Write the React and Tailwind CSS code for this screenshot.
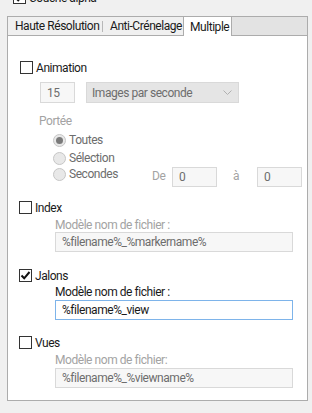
import React from "react";

const font = { fontFamily: 'Roboto, "Noto Sans", sans-serif' };

function Check({ checked, className = "" }) {
  return (
    <div className={"w-[13px] h-[13px] border border-[#333333] bg-white flex items-center justify-center shrink-0 " + className}>
      {checked && (
        <svg width="11" height="11" viewBox="0 0 11 11">
          <path d="M1.5 5.5 L4.2 8.3 L9.5 2" stroke="#111" strokeWidth="2" fill="none" />
        </svg>
      )}
    </div>
  );
}

function Radio({ selected, className = "" }) {
  return (
    <div className={"w-[13px] h-[13px] rounded-full border border-[#c6c6c6] bg-[#e8e8e8] flex items-center justify-center shrink-0 " + className}>
      {selected && <div className="w-[7px] h-[7px] rounded-full bg-[#7a7a7a]" />}
    </div>
  );
}

function DisabledInput({ value, className = "" }) {
  return (
    <div className={"h-[20px] shrink-0 border border-[#d9d9d9] bg-[#f7f7f7] text-[#6d6d6d] flex items-center pl-[6px] whitespace-nowrap " + className}>
      {value}
    </div>
  );
}

export default function App() {
  return (
    <div className="w-[312px] h-[413px] bg-[#f0f0f0] overflow-hidden text-[12px] leading-[16px] tracking-[-0.45px] text-[#1a1a1a] whitespace-nowrap" style={font}>
      <div className="flex items-center h-[13px] mt-[-9px] pl-[13px] gap-[3px]">
        <Check checked />
        <span>Couche alpha</span>
      </div>
      <div className="ml-[7px] mt-[12px] w-[301px] flex h-[20px] border-t border-l border-[#acacac]">
        <div className="flex items-center w-[175px] shrink-0 border-b border-[#acacac] bg-[#f0f0f0]">
          <span className="pl-[7px] w-[94px] shrink-0">Haute Résolution</span>
          <div className="w-px h-[11px] bg-[#b8b8b8] shrink-0" />
          <span className="pl-[7px]">Anti-Crénelage</span>
        </div>
        <div className="w-[49px] shrink-0 bg-white border-l border-r border-[#acacac] flex items-center pl-[6px]">
          Multiple
        </div>
        <div className="flex-1 bg-[#e3e3e3] border-b border-r border-[#acacac]" />
      </div>
      <div className="ml-[7px] w-[301px] h-[365px] bg-white border-l border-r border-b border-[#acacac] flex flex-col">
        {/* Animation */}
        <div className="flex items-center h-[13px] mt-[25px] pl-[12px] gap-[3px]">
          <Check />
          <span>Animation</span>
        </div>
        <div className="flex mt-[8px] pl-[32px] gap-[11px]">
          <DisabledInput value="15" className="w-[35px] h-[21px]" />
          <div className="w-[153px] h-[21px] shrink-0 bg-[#e5e5e5] border border-[#d9d9d9] text-[#6d6d6d] flex items-center justify-between pl-[5px] pr-[6px]">
            <span>Images par seconde</span>
            <svg width="9" height="6" viewBox="0 0 9 6">
              <path d="M0.5 0.5 L4.5 4.5 L8.5 0.5" stroke="#b0b0b0" fill="none" />
            </svg>
          </div>
        </div>
        <div className="mt-[10px] pl-[31px] text-[#a3a3a3]">Portée</div>
        <div className="flex flex-col pl-[45px] text-[#6d6d6d] mt-[2px]">
          <div className="flex items-center h-[18px] gap-[3px]">
            <Radio selected />
            <span>Toutes</span>
          </div>
          <div className="flex items-center h-[18px] gap-[3px]">
            <Radio />
            <span>Sélection</span>
          </div>
          <div className="flex items-start h-[20px] gap-[3px]">
            <Radio className="mt-[1px]" />
            <span className="w-[80px] shrink-0 leading-[14px]">Secondes</span>
            <span className="text-[#a3a3a3] w-[17px] shrink-0 mt-[1px]">De</span>
            <DisabledInput value="0" className="w-[45px]" />
            <span className="text-[#a3a3a3] w-[34px] pl-[13px] shrink-0 mt-[1px]">à</span>
            <DisabledInput value="0" className="w-[45px]" />
          </div>
        </div>
        {/* Index */}
        <div className="flex items-center h-[13px] mt-[14px] pl-[11px] gap-[3px]">
          <Check />
          <span>Index</span>
        </div>
        <div className="pl-[47px] mt-[4px] leading-[14px] text-[#a3a3a3]">Modèle nom de fichier :</div>
        <div className="pl-[47px]">
          <DisabledInput value="%filename%_%markername%" className="w-[238px]" />
        </div>
        {/* Jalons */}
        <div className="flex items-center h-[13px] mt-[17px] pl-[11px] gap-[3px]">
          <Check checked />
          <span>Jalons</span>
        </div>
        <div className="pl-[47px] mt-[3px] leading-[14px]">Modèle nom de fichier :</div>
        <div className="pl-[47px] mt-[1px]">
          <div className="w-[238px] h-[20px] border border-[#7eb4ea] bg-white flex items-center pl-[6px]">
            %filename%_view
          </div>
        </div>
        {/* Vues */}
        <div className="flex items-center h-[13px] mt-[16px] pl-[11px] gap-[3px]">
          <Check />
          <span>Vues</span>
        </div>
        <div className="pl-[47px] mt-[4px] leading-[14px] text-[#a3a3a3]">Modèle nom de fichier:</div>
        <div className="pl-[47px] mt-[1px]">
          <DisabledInput value="%filename%_%viewname%" className="w-[238px]" />
        </div>
      </div>
    </div>
  );
}
